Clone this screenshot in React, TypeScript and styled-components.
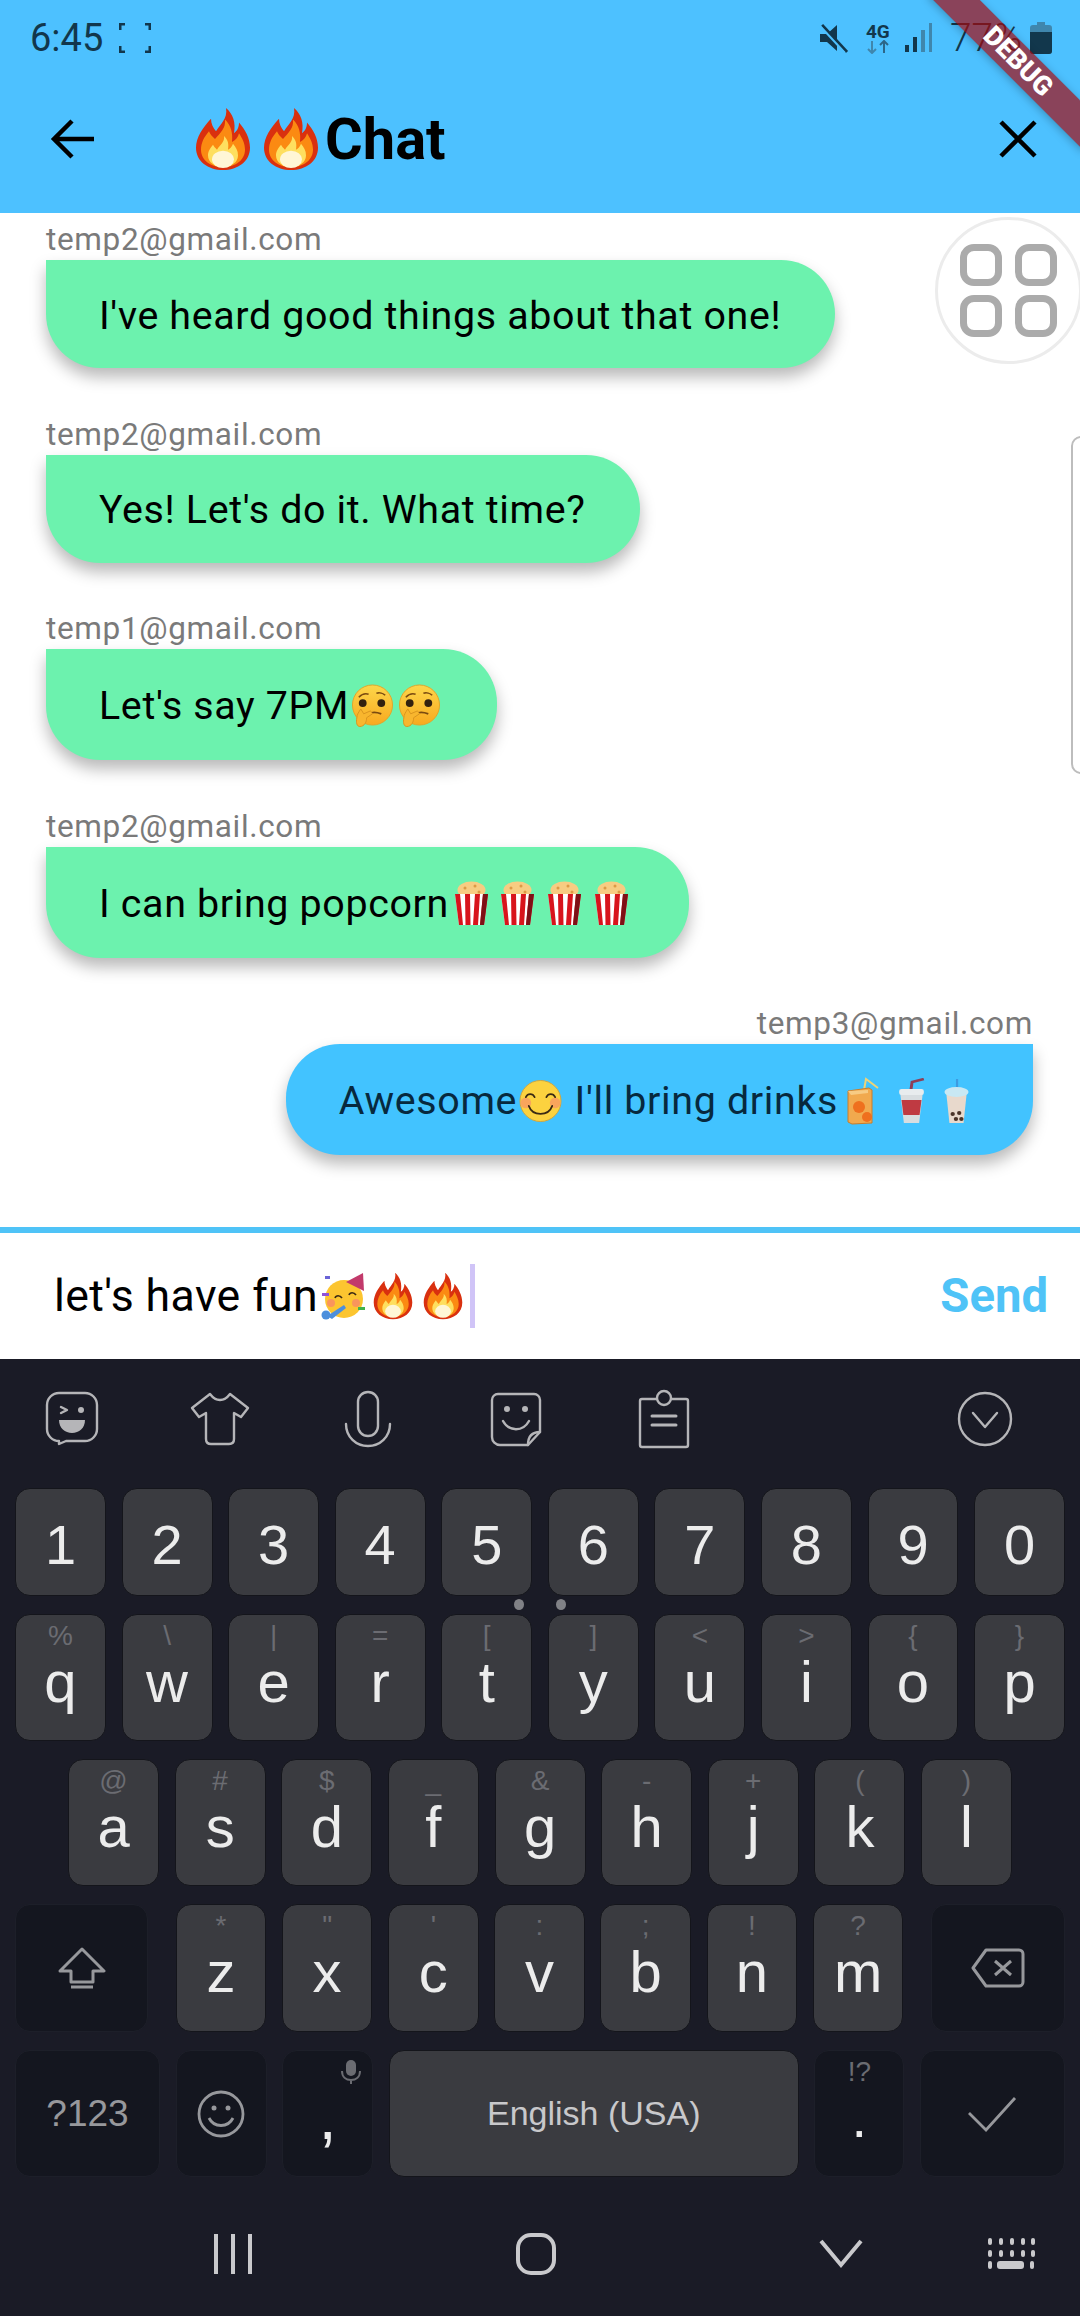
import React from 'react';
import styled, { createGlobalStyle } from 'styled-components';

const GlobalStyle = createGlobalStyle`
  html, body {
    margin: 0;
    padding: 0;
    background: #fff;
  }
`;

const roboto = `Roboto, "Noto Sans", sans-serif`;
const helvetica = `"Liberation Sans", Arial, sans-serif`;

const Screen = styled.div`
  position: relative;
  width: 1080px;
  height: 2316px;
  display: flex;
  flex-direction: column;
  overflow: hidden;
  background: #fff;
  font-family: ${roboto};
`;

/* header */
const Header = styled.header`
  height: 213px;
  flex: none;
  background: #4dc1ff;
  display: flex;
  flex-direction: column;
`;

const StatusBar = styled.div`
  height: 76px;
  padding: 0 28px 0 30px;
  display: flex;
  align-items: center;
  color: #12374c;
`;

const StatusTime = styled.span`
  font-size: 38px;
  margin-right: 16px;
`;

const StatusRight = styled.div`
  margin-left: auto;
  display: flex;
  align-items: center;
`;

const Network = styled.div`
  width: 26px;
  margin: 0 13px 0 16px;
  display: flex;
  flex-direction: column;
  align-items: center;
  font-size: 19px;
  line-height: 17px;
  font-weight: 700;
`;

const Battery = styled.span`
  font-size: 39px;
  font-weight: 300;
  margin: 0 8px 0 18px;
`;

const AppBar = styled.div`
  flex: 1;
  display: flex;
  align-items: center;
  padding: 0 43px 12px 50px;
`;

const Title = styled.h1`
  margin: 0 0 0 93px;
  display: flex;
  align-items: center;
  font-size: 57.75px;
  line-height: 64px;
  font-weight: 700;
  color: #000;
`;

const CloseButton = styled.div`
  margin-left: auto;
  display: flex;
`;

const DebugBanner = styled.div`
  position: absolute;
  top: 45px;
  left: 908px;
  width: 220px;
  height: 33px;
  transform: rotate(45deg);
  background: rgba(168, 8, 12, 0.68);
  box-shadow: 0 2px 8px rgba(0, 0, 0, 0.25);
  color: #fff;
  font-size: 26.8px;
  font-weight: 900;
  line-height: 33px;
  text-align: center;
`;

/* messages */
const Messages = styled.main`
  flex: 1;
  padding: 13px 47px 0 46px;
  display: flex;
  flex-direction: column;
  gap: 52.5px;
`;

const Message = styled.div<{ $me?: boolean }>`
  display: flex;
  flex-direction: column;
  align-items: ${(p) => (p.$me ? 'flex-end' : 'flex-start')};
`;

const Sender = styled.div`
  height: 34px;
  font-size: 31.5px;
  letter-spacing: 0.65px;
  line-height: 28px;
  color: #7a7a7a;
`;

const Bubble = styled.div<{ $me?: boolean; $tall?: boolean }>`
  display: flex;
  align-items: center;
  padding: 27px 54px 25px 53px;
  height: ${(p) => (p.$tall ? 59 : 56)}px;
  font-size: 39.4px;
  letter-spacing: 0.65px;
  white-space: pre;
  color: ${(p) => (p.$me ? '#07293e' : '#000')};
  background: ${(p) => (p.$me ? '#42c3ff' : '#6cf2ae')};
  border-radius: ${(p) => (p.$me ? '54px 0 54px 54px' : '0 54px 54px 54px')};
  box-shadow: 0 9px 16px rgba(0, 0, 0, 0.28);
`;

const AssistiveTouch = styled.div`
  position: absolute;
  left: 935px;
  top: 217px;
  width: 141px;
  height: 141px;
  border: 3px solid #ececec;
  border-radius: 50%;
  background: rgba(255, 255, 255, 0.85);
  display: grid;
  grid-template-columns: 42px 42px;
  grid-auto-rows: 42px;
  gap: 9px 13px;
  align-content: center;
  justify-content: center;
`;

const TouchCell = styled.div`
  border: 7px solid #ababab;
  border-radius: 14px;
  box-sizing: border-box;
`;

const EdgeHandle = styled.div`
  position: absolute;
  left: 1071px;
  top: 436px;
  width: 14px;
  height: 338px;
  border: 2px solid #bdbdbd;
  border-radius: 10px 0 0 10px;
  box-sizing: border-box;
`;

/* composer */
const Composer = styled.div`
  height: 126px;
  flex: none;
  border-top: 6px solid #4fc3f7;
  display: flex;
  align-items: center;
  padding: 0 32px 0 54px;
`;

const Draft = styled.div`
  display: flex;
  align-items: center;
  font-size: 44.6px;
  letter-spacing: 0.4px;
  color: #000;
  white-space: pre;
`;

const Caret = styled.span`
  width: 5px;
  height: 64px;
  margin-left: 2px;
  background: #d0c4f7;
`;

const Send = styled.span`
  margin-left: auto;
  font-size: 47.25px;
  font-weight: 700;
  color: #4fc3f7;
`;

/* keyboard */
const Keyboard = styled.section`
  height: 957px;
  flex: none;
  position: relative;
  background: #1a1b26;
  display: flex;
  flex-direction: column;
  font-family: ${helvetica};
`;

const Toolbar = styled.div`
  height: 129px;
  flex: none;
  display: flex;
  align-items: center;
  gap: 88px;
  padding: 0 65px 9px 42px;
  box-sizing: border-box;
`;

const ToolIcon = styled.svg<{ $end?: boolean }>`
  width: 60px;
  height: 60px;
  flex: none;
  margin-left: ${(p) => (p.$end ? 'auto' : '0')};
  fill: none;
  stroke: #b5b5b8;
  stroke-width: 2.4;
  stroke-linecap: round;
  stroke-linejoin: round;
`;

const Rows = styled.div`
  display: flex;
  flex-direction: column;
  gap: 18px;
  padding: 0 15px;
`;

const Row = styled.div<{ $inset?: number; $height: number }>`
  display: flex;
  gap: 15.6px;
  height: ${(p) => p.$height}px;
  padding: 0 ${(p) => p.$inset ?? 0}px;
`;

const Key = styled.div<{ $dark?: boolean; $width?: number; $pad?: number; $before?: number }>`
  position: relative;
  flex: ${(p) => (p.$width ? `0 0 ${p.$width}px` : '1 1 0')};
  min-width: 0;
  box-sizing: border-box;
  display: flex;
  flex-direction: column;
  align-items: center;
  padding-top: ${(p) => p.$pad ?? 0}px;
  margin-left: ${(p) => p.$before ?? 0}px;
  border-radius: 15px;
  background: ${(p) => (p.$dark ? '#14161f' : '#3a3b40')};
  border: 1px solid ${(p) => (p.$dark ? '#1d1f29' : '#14151b')};
`;

const KeyCenter = styled(Key)`
  justify-content: center;
`;

const Hint = styled.span`
  height: 28px;
  margin-top: 7px;
  font-size: 28px;
  line-height: 28px;
  color: #6b6c72;
`;

const Letter = styled.span<{ $size?: number; $drop?: number }>`
  font-size: ${(p) => p.$size ?? 58}px;
  line-height: 64px;
  margin-top: ${(p) => p.$drop ?? 0}px;
  color: #ececec;
`;

const Label = styled.span<{ $size: number; $color: string }>`
  font-size: ${(p) => p.$size}px;
  color: ${(p) => p.$color};
`;

const PageDots = styled.div`
  position: absolute;
  top: 240px;
  left: 514px;
  display: flex;
  gap: 32px;
`;

const PageDot = styled.i`
  width: 10px;
  height: 11px;
  border-radius: 50%;
  background: #808186;
`;

const MicHint = styled.svg`
  position: absolute;
  top: 9px;
  right: 11px;
  width: 20px;
  height: 24px;
`;

const NavBar = styled.nav`
  flex: 1;
  display: flex;
  align-items: center;
  padding: 14px 45px 0 213px;
`;

const NavIcon = styled.svg<{ $end?: boolean; $w?: number; $after?: number }>`
  width: ${(p) => p.$w ?? 40}px;
  height: 42px;
  flex: none;
  margin-left: ${(p) => (p.$end ? 'auto' : '0')};
  margin-right: ${(p) => p.$after ?? 0}px;
  fill: none;
  stroke: #c9c9cc;
  stroke-width: 4;
`;

const EmojiBox = styled.svg<{ $w: number; $h: number; $gap?: number }>`
  width: ${(p) => p.$w}px;
  height: ${(p) => p.$h}px;
  flex: none;
  margin: 0 ${(p) => p.$gap ?? 2}px;
`;

type EmojiProps = { w?: number; h?: number; gap?: number };

const Fire: React.FC<EmojiProps> = ({ w = 40, h = 48, gap = 6 }) => (
  <EmojiBox $w={w} $h={h} $gap={gap} viewBox="0 0 56 66" preserveAspectRatio="none">
    <path d="M31 1C33 12 25 18 21 25 18 21 16 17 16 12 8 21 1 31 1 42 1 56 13 65 28 65 43 65 55 56 55 42 55 32 50 23 44 16 44 21 42 25 39 27 41 16 38 7 31 1Z" fill="#d9300f" />
    <path d="M30 13C31 22 25 27 20 33 17 30 15 28 14 25 9 31 6 37 6 44 6 55 16 62 28 62 41 62 50 54 50 44 50 37 47 32 44 27 43 31 41 34 37 36 38 27 36 19 30 13Z" fill="#fb8a12" />
    <path d="M29 30C30 36 25 39 22 44 20 42 19 41 18 39 14 44 13 47 13 50 13 57 20 62 28 62 36 62 43 57 43 50 43 45 41 42 38 38 37 41 35 43 33 44 34 38 33 34 29 30Z" fill="#fedf5f" />
    <ellipse cx="28" cy="54" rx="11" ry="9" fill="#fff6d6" />
  </EmojiBox>
);

const Thinking: React.FC = () => (
  <EmojiBox $w={43} $h={44} $gap={2} viewBox="0 0 44 44">
    <defs>
      <linearGradient id="faceGold" x1="0" y1="0" x2="0" y2="1">
        <stop offset="0" stopColor="#fdd64a" />
        <stop offset="1" stopColor="#f8a91f" />
      </linearGradient>
    </defs>
    <circle cx="22" cy="21" r="20.5" fill="url(#faceGold)" stroke="#e0a52a" />
    <path d="M8 13c3-3 7-4 10-3M26 9c3-1 7 0 9 2" stroke="#7a4a10" strokeWidth="1.6" fill="none" />
    <circle cx="12" cy="19" r="4" fill="#33210f" />
    <circle cx="31" cy="19" r="4" fill="#33210f" />
    <path d="M16 31c4-3 10-3 15-1" stroke="#7a4a10" strokeWidth="1.8" fill="none" />
    <path d="M6 34c0-3 2-6 4-9l3 5 7-3 2 3-6 4c0 4-2 9-7 9-3 0-4-4-3-9Z" fill="#f8b62e" stroke="#d9951f" strokeWidth="1" />
  </EmojiBox>
);

const Popcorn: React.FC<{ gap?: number }> = ({ gap = 7 }) => (
  <EmojiBox $w={33} $h={44} $gap={gap} viewBox="0 0 33 44">
    <ellipse cx="16.5" cy="9" rx="14" ry="8.5" fill="#f7cc82" />
    <circle cx="10" cy="7" r="1.5" fill="#dd9a45" />
    <circle cx="20" cy="5" r="1.5" fill="#dd9a45" />
    <circle cx="24" cy="11" r="1.5" fill="#dd9a45" />
    <path d="M0 13h33l-4 31H4Z" fill="#fff" />
    <path d="M0 13h5l3 31H4ZM10 13h5l.5 31h-5ZM20 13h5l-2 31h-5ZM28 13h5l-4 31h-4Z" fill="#d8141c" />
    <path d="M28 13h5l-4 31h-4Z" fill="#7e1016" />
  </EmojiBox>
);

const Blush: React.FC = () => (
  <EmojiBox $w={43} $h={44} $gap={2} viewBox="0 0 44 44">
    <circle cx="22" cy="22" r="21" fill="#fcd23f" stroke="#cfa640" />
    <circle cx="7" cy="24" r="5.5" fill="#f9a55c" />
    <circle cx="37" cy="24" r="5.5" fill="#f9a55c" />
    <path d="M7 18c2-4 7-4 9 0M28 18c2-4 7-4 9 0M10 27c4 11 20 11 24 0" stroke="#3b2a14" strokeWidth="1.8" fill="none" strokeLinecap="round" />
  </EmojiBox>
);

const JuiceBox: React.FC = () => (
  <EmojiBox $w={33} $h={48} $gap={9} viewBox="0 0 33 48">
    <path d="M17 13 19 2l12 9" stroke="#efd377" strokeWidth="2" fill="none" />
    <path d="M1 14 22 11l3 2v33L5 47 1 45Z" fill="#f1a94e" stroke="#c97d2a" />
    <path d="M1 14 21 13v3L4 18Z" fill="#f7cb84" />
    <circle cx="12" cy="30" r="6" fill="#ef701e" />
    <circle cx="20" cy="40" r="5" fill="#ef701e" />
  </EmojiBox>
);

const SodaCup: React.FC = () => (
  <EmojiBox $w={27} $h={46} $gap={9} viewBox="0 0 23 46" preserveAspectRatio="none">
    <path d="M11 12 12 4 22 1" stroke="#8e3f57" strokeWidth="2.5" fill="none" />
    <path d="M2 16h19l-3 29H5Z" fill="#d8dde0" />
    <path d="M3 22h17l-1.6 15H4.6Z" fill="#bf3a42" />
    <rect x="1" y="11" width="21" height="6" rx="2" fill="#e8ecee" />
  </EmojiBox>
);

const BubbleTea: React.FC = () => (
  <EmojiBox $w={25} $h={46} $gap={10} viewBox="0 0 23 46" preserveAspectRatio="none">
    <path d="M12 1v20" stroke="#3d9be0" strokeWidth="2" />
    <path d="M2 14h19l-3 31H5Z" fill="#e8d9cc" />
    <ellipse cx="11.5" cy="14" rx="11" ry="5" fill="#c8e8f3" />
    <circle cx="8" cy="36" r="2" fill="#4a3429" />
    <circle cx="14" cy="35" r="2" fill="#4a3429" />
    <circle cx="11" cy="41" r="2" fill="#4a3429" />
    <circle cx="16" cy="41" r="2" fill="#4a3429" />
  </EmojiBox>
);

const PartyFace: React.FC = () => (
  <EmojiBox $w={46} $h={48} $gap={2} viewBox="0 0 46 48">
    <circle cx="24" cy="27" r="19" fill="#fcc530" />
    <path d="M26 10 43 1l1 18Z" fill="#c23a6b" />
    <path d="M15 26c1-3 5-3 7 0M29 23c1-3 5-3 7 0" stroke="#3b2a14" strokeWidth="1.6" fill="none" />
    <circle cx="11" cy="31" r="4" fill="#f9955c" />
    <circle cx="36" cy="31" r="4" fill="#f9955c" />
    <path d="M7 44 24 33l2 3-14 11Z" fill="#4c8fdc" />
    <circle cx="6" cy="43" r="4.5" fill="#4c8fdc" />
    <rect x="2" y="21" width="7" height="3" fill="#8e52d9" />
    <rect x="38" y="35" width="7" height="3" fill="#42b24c" />
    <rect x="5" y="4" width="5" height="3" fill="#6a63d6" />
  </EmojiBox>
);

const Sticker: React.FC = () => (
  <ToolIcon viewBox="0 0 60 60">
    <path d="M17 4h26a12 12 0 0 1 12 12v24a12 12 0 0 1-12 12H24l-7 3v-3a12 12 0 0 1-12-12V16A12 12 0 0 1 17 4Z" />
    <path d="m19 18 6 3-6 3" />
    <circle cx="39" cy="21" r="3" fill="#b5b5b8" stroke="none" />
    <path d="M17 31h26c0 8-6 13-13 13s-13-5-13-13Z" fill="#b5b5b8" stroke="none" />
  </ToolIcon>
);

const Shirt: React.FC = () => (
  <ToolIcon viewBox="0 0 60 60">
    <path d="M20 5c3 4 7 6 10 6s7-2 10-6l18 14-7 9-7-4v26c0 4-3 5-5 5H21c-3 0-5-1-5-5V24l-7 4-7-9Z" />
  </ToolIcon>
);

const Mic: React.FC = () => (
  <ToolIcon viewBox="0 0 60 60">
    <rect x="20" y="3" width="20" height="44" rx="10" />
    <path d="M8 35c0 13 10 22 22 22s22-9 22-22" />
  </ToolIcon>
);

const Smiley: React.FC = () => (
  <ToolIcon viewBox="0 0 60 60">
    <path d="M12 5h36a6 6 0 0 1 6 6v32L42 56H14a8 8 0 0 1-8-8V11a6 6 0 0 1 6-6Z" />
    <path d="M42 56c0-8 4-13 12-13" />
    <circle cx="21" cy="20" r="3" fill="#b5b5b8" stroke="none" />
    <circle cx="39" cy="20" r="3" fill="#b5b5b8" stroke="none" />
    <path d="M17 32c6 11 20 11 26 0" />
  </ToolIcon>
);

const Clipboard: React.FC = () => (
  <ToolIcon viewBox="0 0 60 60">
    <path d="M22 10H8a2 2 0 0 0-2 2v44a2 2 0 0 0 2 2h44a2 2 0 0 0 2-2V12a2 2 0 0 0-2-2H38" />
    <circle cx="30" cy="9" r="7" />
    <path d="M18 27h24M18 36h24" strokeWidth="3" />
  </ToolIcon>
);

const ChevronCircle: React.FC = () => (
  <ToolIcon $end viewBox="0 0 60 60">
    <circle cx="30" cy="30" r="26" />
    <path d="m18 24 12 14 12-14" />
  </ToolIcon>
);

const digits = ['1', '2', '3', '4', '5', '6', '7', '8', '9', '0'];
const rowQ = [['q', '%'], ['w', '\\'], ['e', '|'], ['r', '='], ['t', '['], ['y', ']'], ['u', '<'], ['i', '>'], ['o', '{'], ['p', '}']];
const rowA = [['a', '@'], ['s', '#'], ['d', '$'], ['f', '_'], ['g', '&'], ['h', '-'], ['j', '+'], ['k', '('], ['l', ')']];
const rowZ = [['z', '*'], ['x', '"'], ['c', "'"], ['v', ':'], ['b', ';'], ['n', '!'], ['m', '?']];

const LetterKey: React.FC<{ pair: string[]; before?: number }> = ({ pair, before }) => (
  <Key $before={before}>
    <Hint>{pair[1]}</Hint>
    <Letter>{pair[0]}</Letter>
  </Key>
);

export default function App() {
  return (
    <Screen>
      <GlobalStyle />
      <Header>
        <StatusBar>
          <StatusTime>6:45</StatusTime>
          <svg width="32" height="30" viewBox="0 0 32 30" fill="none" stroke="#12374c" strokeWidth="3">
            <path d="M1 7V1h5M26 1h5v6M31 23v6h-5M6 29H1v-6" />
          </svg>
          <StatusRight>
            <svg width="30" height="30" viewBox="0 0 30 30">
              <path d="M1 11h7l10-9v26l-10-9H1Z" fill="#12374c" />
              <path d="M3 2l25 27" stroke="#12374c" strokeWidth="3" />
              <path d="M1 3l25 27" stroke="#4dc1ff" strokeWidth="2" />
            </svg>
            <Network>
              4G
              <svg width="24" height="14" viewBox="0 0 24 14" fill="none" strokeWidth="2">
                <path d="M6 1v12M2 9l4 4 4-4" stroke="#3f86ad" />
                <path d="M18 13V1M14 5l4-4 4 4" stroke="#2c6688" />
              </svg>
            </Network>
            <svg width="28" height="30" viewBox="0 0 28 30">
              <rect x="1" y="22" width="4" height="7" fill="#12374c" />
              <rect x="9" y="14" width="4" height="15" fill="#12374c" />
              <rect x="17" y="7" width="4" height="22" fill="#3f86ad" />
              <rect x="25" y="0" width="3" height="29" fill="#3f86ad" />
            </svg>
            <Battery>77%</Battery>
            <svg width="22" height="32" viewBox="0 0 22 32">
              <path d="M7 0h8v3h4a3 3 0 0 1 3 3v23a3 3 0 0 1-3 3H3a3 3 0 0 1-3-3V6a3 3 0 0 1 3-3h4Z" fill="#3f86ad" />
              <path d="M0 10h22v19a3 3 0 0 1-3 3H3a3 3 0 0 1-3-3Z" fill="#12374c" />
            </svg>
          </StatusRight>
        </StatusBar>
        <AppBar>
          <svg width="46" height="40" viewBox="0 0 46 40" fill="none" stroke="#000" strokeWidth="4.5">
            <path d="M44 20H4M22 2 4 20l18 18" />
          </svg>
          <Title>
            <Fire w={56} h={64} gap={6} />
            <Fire w={56} h={64} gap={6} />
            Chat
          </Title>
          <CloseButton>
            <svg width="38" height="38" viewBox="0 0 38 38" fill="none" stroke="#000" strokeWidth="4.5">
              <path d="m2 2 34 34M36 2 2 36" />
            </svg>
          </CloseButton>
        </AppBar>
      </Header>
      <DebugBanner>DEBUG</DebugBanner>

      <Messages>
        <Message>
          <Sender>temp2@gmail.com</Sender>
          <Bubble>I've heard good things about that one!</Bubble>
        </Message>
        <Message>
          <Sender>temp2@gmail.com</Sender>
          <Bubble>Yes! Let's do it. What time?</Bubble>
        </Message>
        <Message>
          <Sender>temp1@gmail.com</Sender>
          <Bubble $tall>
            Let's say 7PM
            <Thinking />
            <Thinking />
          </Bubble>
        </Message>
        <Message>
          <Sender>temp2@gmail.com</Sender>
          <Bubble $tall>
            I can bring popcorn
            <Popcorn gap={6} />
            <Popcorn />
            <Popcorn />
            <Popcorn />
          </Bubble>
        </Message>
        <Message $me>
          <Sender>temp3@gmail.com</Sender>
          <Bubble $me $tall>
            Awesome
            <Blush />
            {" I'll bring drinks"}
            <JuiceBox />
            <SodaCup />
            <BubbleTea />
          </Bubble>
        </Message>
      </Messages>

      <AssistiveTouch>
        <TouchCell />
        <TouchCell />
        <TouchCell />
        <TouchCell />
      </AssistiveTouch>
      <EdgeHandle />

      <Composer>
        <Draft>
          let's have fun
          <PartyFace />
          <Fire gap={5} />
          <Fire gap={5} />
          <Caret />
        </Draft>
        <Send>Send</Send>
      </Composer>

      <Keyboard>
        <Toolbar>
          <Sticker />
          <Shirt />
          <Mic />
          <Smiley />
          <Clipboard />
          <ChevronCircle />
        </Toolbar>
        <Rows>
          <Row $height={108}>
            {digits.map((d) => (
              <Key key={d} $pad={24}>
                <Letter $size={56}>{d}</Letter>
              </Key>
            ))}
          </Row>
          <Row $height={127}>
            {rowQ.map((p) => (
              <LetterKey key={p[0]} pair={p} />
            ))}
          </Row>
          <Row $height={127} $inset={53}>
            {rowA.map((p) => (
              <LetterKey key={p[0]} pair={p} />
            ))}
          </Row>
          <Row $height={128}>
            <KeyCenter $dark $width={133}>
              <svg width="48" height="42" viewBox="0 0 48 42" fill="none" stroke="#97989c" strokeWidth="3" strokeLinejoin="round">
                <path d="M24 2 46 24H35v11H13V24H2ZM13 40h22" />
              </svg>
            </KeyCenter>
            {rowZ.map((p, i) => (
              <LetterKey key={p[0]} pair={p} before={i === 0 ? 12 : 0} />
            ))}
            <KeyCenter $dark $width={134} $before={12}>
              <svg width="54" height="40" viewBox="0 0 54 40" fill="none" stroke="#97989c" strokeWidth="3" strokeLinejoin="round">
                <path d="M15 2h33a4 4 0 0 1 4 4v28a4 4 0 0 1-4 4H15L2 20ZM24 13l16 14M40 13 24 27" />
              </svg>
            </KeyCenter>
          </Row>
          <Row $height={127}>
            <KeyCenter $dark $width={145}>
              <Label $size={37} $color="#97989c">?123</Label>
            </KeyCenter>
            <KeyCenter $dark $width={91}>
              <svg width="50" height="50" viewBox="0 0 50 50" fill="none" stroke="#97989c" strokeWidth="2.8">
                <circle cx="25" cy="25" r="22" />
                <path d="M13 29c5 10 19 10 24 0" />
                <circle cx="18" cy="19" r="2.5" fill="#97989c" stroke="none" />
                <circle cx="32" cy="19" r="2.5" fill="#97989c" stroke="none" />
              </svg>
            </KeyCenter>
            <Key $dark $width={91} $pad={34}>
              <MicHint viewBox="0 0 20 24" fill="#6b6c72">
                <rect x="5" y="0" width="10" height="16" rx="5" />
                <path d="M1 11c0 6 4 9 9 9s9-3 9-9M10 20v4" stroke="#6b6c72" strokeWidth="2" fill="none" />
              </MicHint>
              <Letter $size={64}>,</Letter>
            </Key>
            <KeyCenter $width={410}>
              <Label $size={34} $color="#c8c8cb">English (USA)</Label>
            </KeyCenter>
            <Key $dark $width={90}>
              <Hint>!?</Hint>
              <Letter $size={56}>.</Letter>
            </Key>
            <KeyCenter $dark $width={145}>
              <svg width="50" height="36" viewBox="0 0 50 36" fill="none" stroke="#97989c" strokeWidth="2.8">
                <path d="m2 17 17 17L48 2" />
              </svg>
            </KeyCenter>
          </Row>
        </Rows>
        <PageDots>
          <PageDot />
          <PageDot />
        </PageDots>
        <NavBar>
          <NavIcon $after={263} viewBox="0 0 40 42">
            <path d="M3 1v40M20 1v40M37 1v40" />
          </NavIcon>
          <NavIcon $after={263} viewBox="0 0 40 42">
            <rect x="2" y="2" width="36" height="38" rx="13" />
          </NavIcon>
          <NavIcon viewBox="0 0 44 42" $w={44}>
            <path d="m2 8 20 24L42 8" />
          </NavIcon>
          <NavIcon $end $w={48} viewBox="0 0 48 42">
            <g stroke="none" fill="#c9c9cc">
              {[8, 20].map((y) =>
                [2, 13, 24, 35, 45].map((x) => <rect key={`${x}-${y}`} x={x - 1} y={y - 3} width="4" height="7" rx="2" />),
              )}
              <rect x="1" y="28" width="4" height="8" rx="2" />
              <rect x="10" y="28" width="27" height="8" rx="3" />
              <rect x="43" y="28" width="4" height="8" rx="2" />
            </g>
          </NavIcon>
        </NavBar>
      </Keyboard>
    </Screen>
  );
}
